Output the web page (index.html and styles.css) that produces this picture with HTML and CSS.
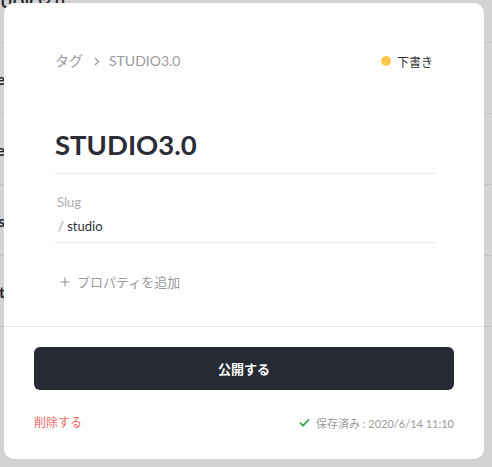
FILE: index.html
```html
<!DOCTYPE html>
<html lang="ja">
<head>
<meta charset="utf-8">
<title>STUDIO3.0</title>
<link rel="stylesheet" href="styles.css">
</head>
<body>
<div class="bg-list">
  <div class="bg-row bg-row-first"><span class="bg-head">STUDIO3.0</span></div>
  <div class="bg-row"><span class="bg-name">Note</span></div>
  <div class="bg-row"><span class="bg-name">Make</span></div>
  <div class="bg-row"><span class="bg-name">Tags</span></div>
  <div class="bg-row"><span class="bg-name">Test</span></div>
  <div class="bg-row bg-row-last"></div>
</div>

<div class="modal">
  <div class="modal-body">
    <div class="topbar">
      <div class="breadcrumb">
        <span class="crumb">タグ</span>
        <svg class="chev" width="6" height="9" viewBox="0 0 6 9"><path d="M1 1l3.5 3.5L1 8" fill="none" stroke="#9a9a9a" stroke-width="1.3"/></svg>
        <span class="crumb">STUDIO3.0</span>
      </div>
      <div class="status"><span class="dot"></span><span class="status-text">下書き</span></div>
    </div>
    <h1 class="title">STUDIO3.0</h1>
    <div class="field">
      <div class="field-label">Slug</div>
      <div class="field-value"><span class="slash">/</span> studio</div>
    </div>
    <div class="add-prop">
      <svg class="plus" width="10" height="10" viewBox="0 0 10 10"><path d="M5 0.5v9M0.5 5h9" stroke="#9a9a9a" stroke-width="1.2"/></svg>
      <span>プロパティを追加</span>
    </div>
  </div>
  <div class="modal-footer">
    <button class="publish">公開する</button>
    <div class="footer-row">
      <span class="delete">削除する</span>
      <span class="saved">
        <svg class="check" width="11" height="9" viewBox="0 0 11 9"><path d="M1 4.6l3 3L10 1.4" fill="none" stroke="#3aa757" stroke-width="1.8"/></svg>
        保存済み : 2020/6/14 11:10
      </span>
    </div>
  </div>
</div>
</body>
</html>
```

FILE: styles.css
```css
* { box-sizing: border-box; }
html, body { margin: 0; padding: 0; }
body {
  width: 492px;
  height: 467px;
  overflow: hidden;
  background: #d3d3d3;
  font-family: "Lato", "Noto Sans CJK JP", sans-serif;
  position: relative;
}

.bg-list {
  display: flex;
  flex-direction: column;
  margin-top: -28px;
}
.bg-row {
  height: 71px;
  flex: none;
  border-bottom: 1px solid #c5c5c5;
  display: flex;
  align-items: center;
  font-size: 16px;
  font-weight: 700;
  color: #23262c;
}
.bg-row-first { align-items: flex-end; padding-bottom: 31px; }
.bg-row-last { border-bottom: 0; }
.bg-head { margin-left: -18px; }
.bg-name {
  width: 105px;
  margin-left: -100px;
  text-align: right;
}

.modal {
  position: absolute;
  left: 4px;
  top: 3px;
  width: 480px;
  height: 456px;
  background: #fff;
  border-radius: 10px;
  display: flex;
  flex-direction: column;
}
.modal-body {
  height: 324px;
  padding: 48px 50px 0 51px;
  border-bottom: 1px solid #e6e6e6;
}
.topbar {
  display: flex;
  justify-content: space-between;
  align-items: center;
  height: 20px;
}
.breadcrumb {
  display: flex;
  align-items: center;
  font-size: 14px;
  line-height: 20px;
  color: #9a9a9a;
}
.chev { margin: 0 9px 0 11px; }
.status {
  display: flex;
  align-items: center;
  font-size: 12px;
  color: #333;
  margin-right: 1px;
}
.dot {
  width: 10px;
  height: 10px;
  border-radius: 50%;
  background: #fec84c;
  margin-right: 6px;
}
.title {
  margin: 57px 0 0;
  font-size: 27.5px;
  line-height: 33px;
  font-weight: 700;
  color: #2a2d35;
  padding-bottom: 12px;
  border-bottom: 1px solid #e6e6e6;
}
.field {
  margin-top: 20px;
  border-bottom: 1px solid #e6e6e6;
  padding-bottom: 7px;
}
.field-label {
  font-size: 13px;
  line-height: 16px;
  color: #adadad;
  padding-left: 2px;
}
.field-value {
  margin-top: 7px;
  font-size: 13px;
  line-height: 18px;
  color: #2f3238;
  padding-left: 3px;
}
.slash { color: #9a9a9a; }
.add-prop {
  margin-top: 30px;
  display: flex;
  align-items: center;
  font-size: 13px;
  line-height: 18px;
  color: #9a9a9a;
  padding-left: 5px;
}
.plus { margin-right: 7px; }

.modal-footer {
  padding: 20px 30px 0;
}
.publish {
  display: block;
  width: 100%;
  height: 43px;
  border: 0;
  border-radius: 6px;
  background: #262a33;
  color: #fff;
  font-family: "Lato", "Noto Sans CJK JP", sans-serif;
  font-size: 13px;
  font-weight: 700;
}
.footer-row {
  margin-top: 22px;
  display: flex;
  justify-content: space-between;
  align-items: center;
  height: 18px;
}
.delete {
  font-size: 12px;
  color: #f06868;
}
.saved {
  display: flex;
  align-items: center;
  font-size: 11px;
  color: #9a9a9a;
  margin-top: 3px;
}
.check { margin-right: 6px; }
```
